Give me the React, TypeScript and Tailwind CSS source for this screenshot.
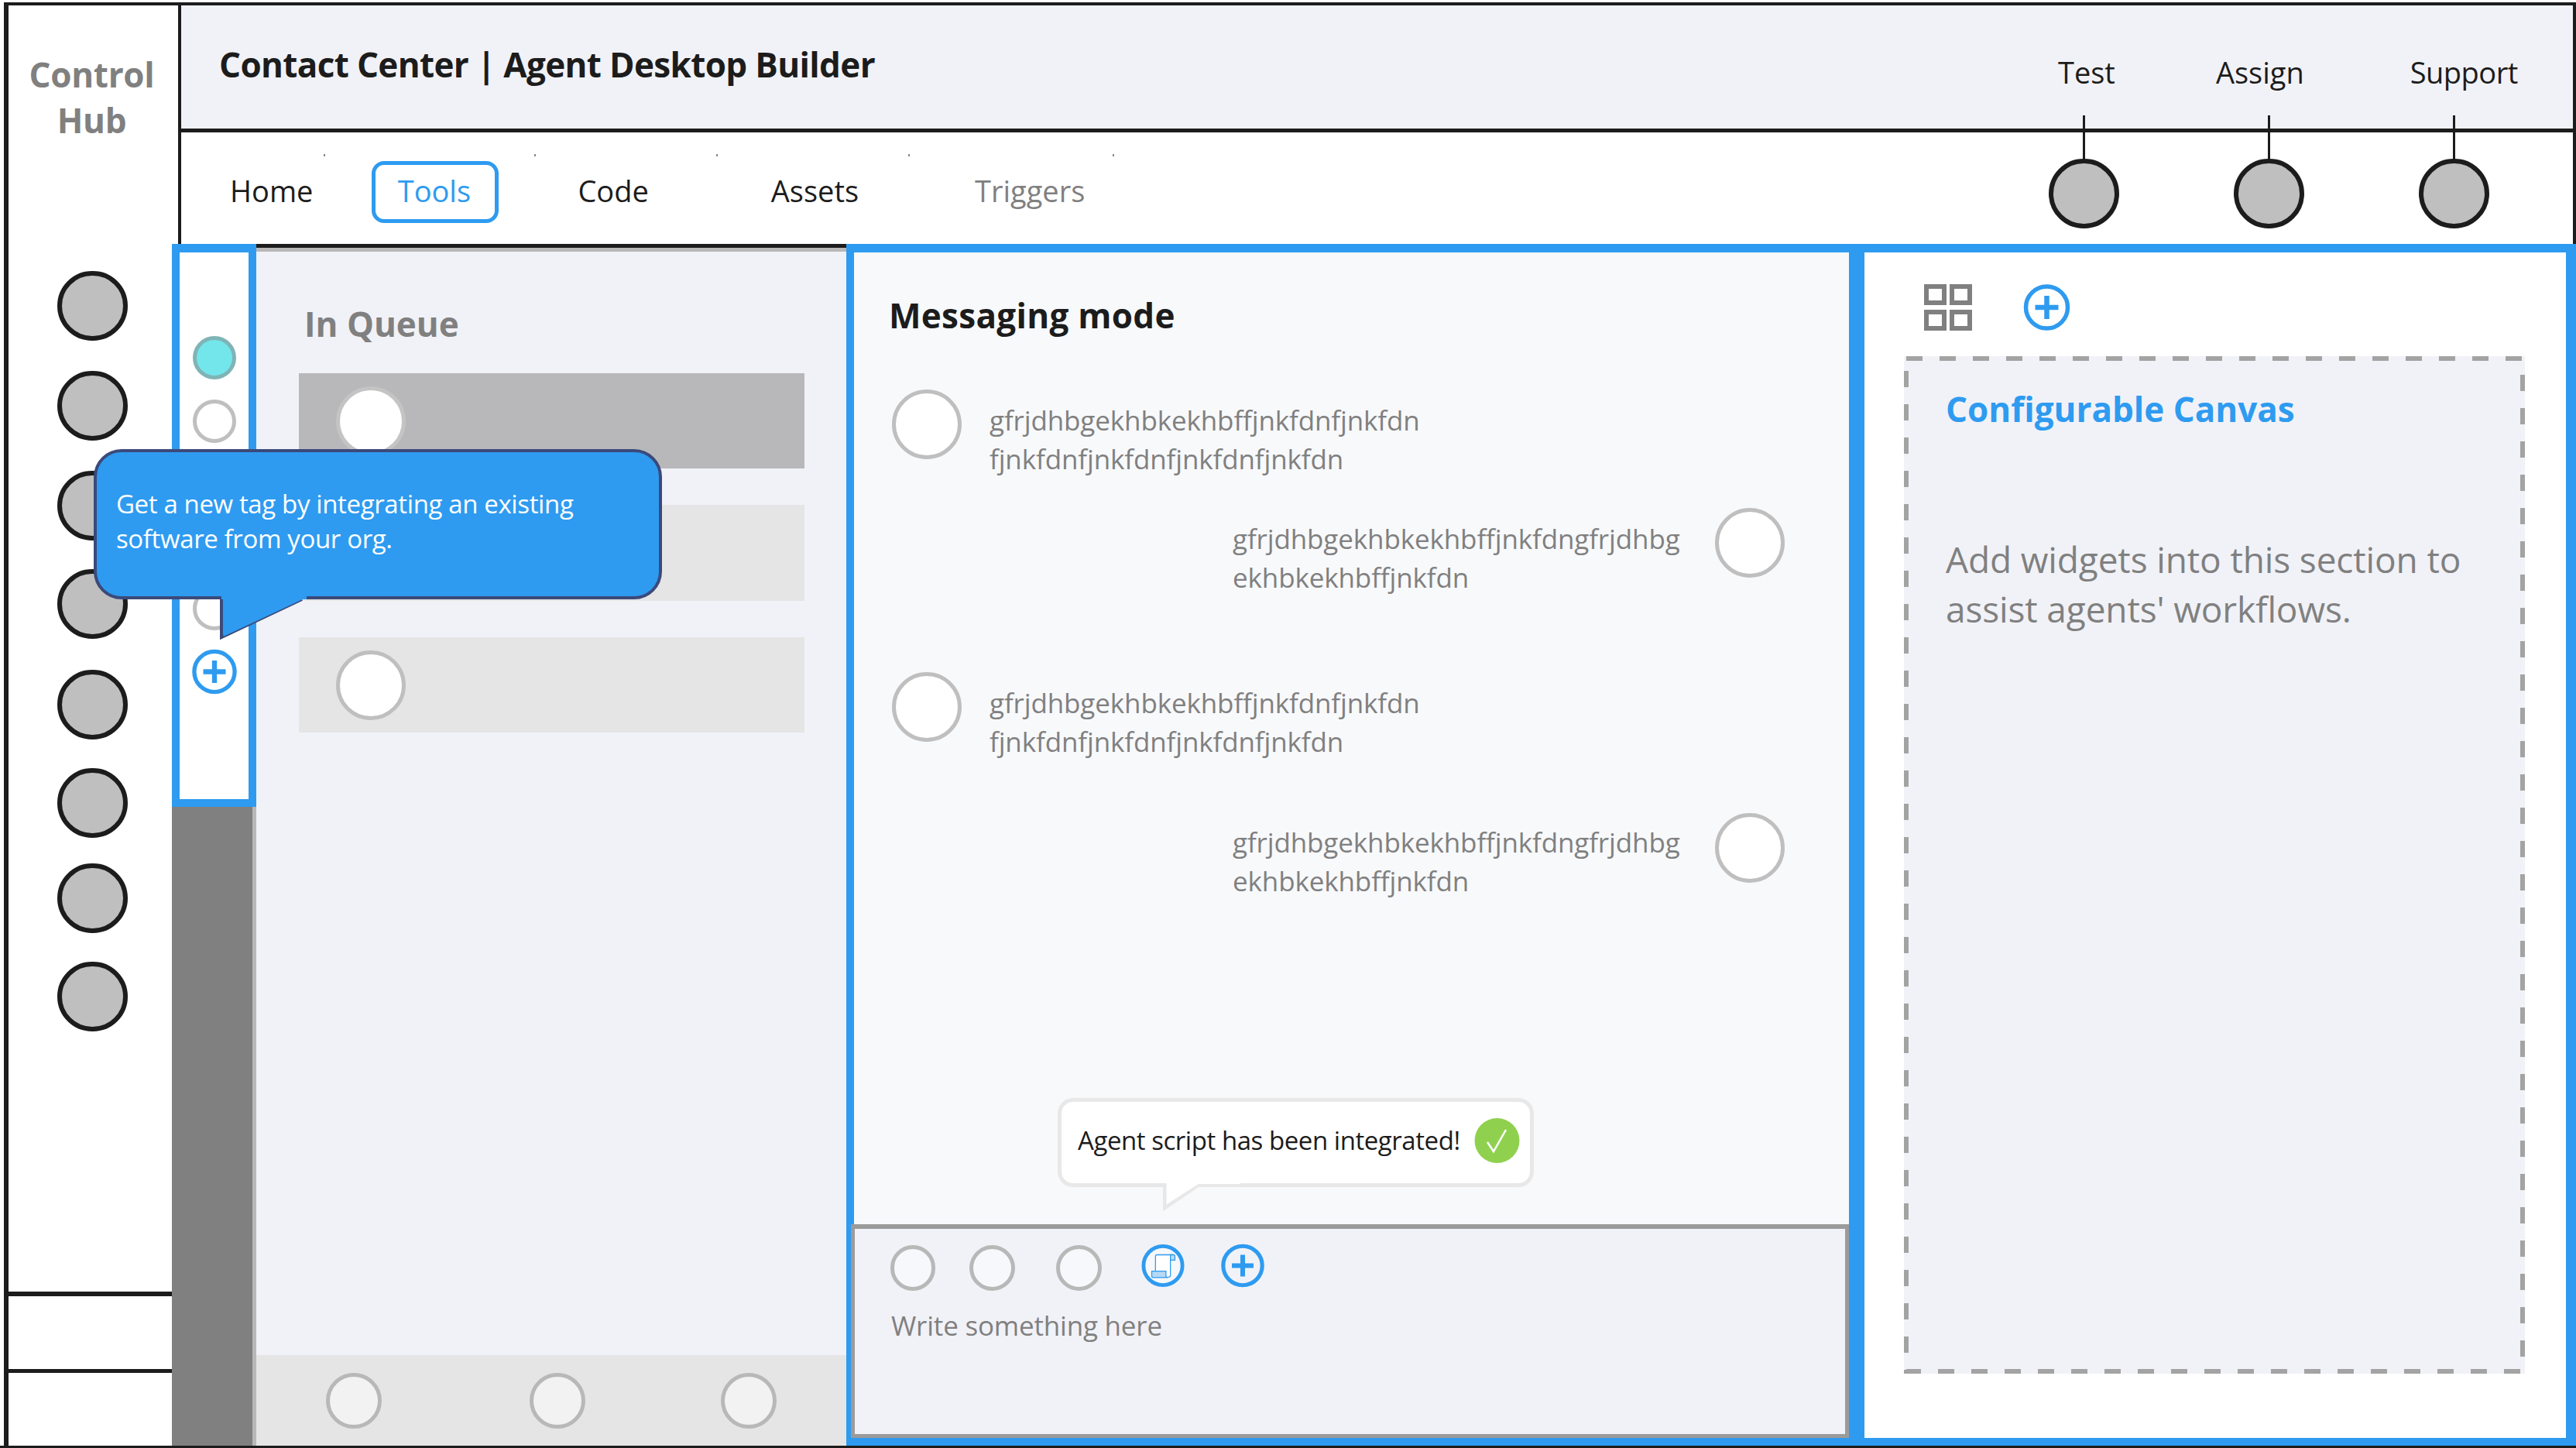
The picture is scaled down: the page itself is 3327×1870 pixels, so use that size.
import React from "react";

const Dark = ({ className = "" }: { className?: string }) => (
  <div className={`h-[90px] w-[91px] shrink-0 rounded-full border-[6px] border-[#1c1c1c] bg-[#bfbfbf] ${className}`} />
);

const Ring = ({ className = "" }: { className?: string }) => (
  <div className={`rounded-full border-solid shrink-0 ${className}`} />
);

const Plus = ({ className = "" }: { className?: string }) => (
  <svg className={`shrink-0 ${className}`} viewBox="0 0 60 60" fill="none">
    <circle cx="30" cy="30" r="27" stroke="#2e9bf0" strokeWidth="5.5" />
    <path d="M30 15V45M15 30H45" stroke="#2e9bf0" strokeWidth="6.5" />
  </svg>
);

const Scroll = () => (
  <svg className="h-[59px] w-[56px] shrink-0" viewBox="0 0 58 59" fill="none">
    <circle cx="29" cy="29.5" r="26" fill="#f7f8fb" stroke="#2e9bf0" strokeWidth="5" />
    <path d="M19 39V17Q19 15 21 15H43Q40 15 39 19V42Q39 45 36 45" fill="#fff" stroke="#2e9bf0" strokeWidth="1.3" />
    <path d="M39 15H43Q45 15 45 17V22H39Z" fill="#bcdcf5" stroke="#2e9bf0" strokeWidth="1.3" />
    <path d="M14 37H33V43Q33 45.5 36 45.5H16Q14 45.5 14 43Z" fill="#b5d9f5" stroke="#2e9bf0" strokeWidth="1.3" />
  </svg>
);

const Message = ({ a, b, className = "" }: { a: string; b: string; className?: string }) => (
  <div className={`text-[35px] leading-[50px] tracking-[-0.12px] text-[#808080] whitespace-nowrap ${className}`}>
    <div>{a}</div>
    <div>{b}</div>
  </div>
);

const Avatar = () => (
  <Ring className="h-[90px] w-[90px] border-[5px] border-[#bfbfbf] bg-white" />
);

export default function App() {
  return (
    <div
      className="flex h-[1870px] w-[3327px] overflow-hidden bg-white pt-[3px] pl-[5px] border-b-[3px] border-[#1c1c1c]"
      style={{ fontFamily: '"Open Sans", sans-serif' }}
    >
      {/* Left sidebar */}
      <aside className="flex h-full w-[229px] shrink-0 flex-col border-t-[4px] border-l-[6px] border-[#1c1c1c]">
        <div className="h-[308px] shrink-0 border-r-[4px] border-[#1c1c1c] pt-[60px] pr-[4px] text-center text-[44px] font-bold leading-[59px] tracking-[-0.3px] text-[#808080]">
          Control
          <br />
          Hub
        </div>
        <div className="flex w-[216px] flex-col items-center">
          <Dark className="mt-[35px]" />
          <Dark className="mt-[39px]" />
          <Dark className="mt-[39px]" />
          <Dark className="mt-[37px]" />
          <Dark className="mt-[40px]" />
          <Dark className="mt-[37px]" />
          <Dark className="mt-[33px]" />
          <Dark className="mt-[37px]" />
        </div>
        <div className="mt-auto h-[100px] w-[217px] border-t-[6px] border-[#1c1c1c]" />
        <div className="h-[99px] w-[217px] border-t-[5px] border-[#1c1c1c]" />
      </aside>

      {/* Main column */}
      <div className="flex h-full min-w-0 flex-1 flex-col">
        <header className="flex h-[168px] shrink-0 border-t-[4px] border-r-[4px] border-b-[5px] border-[#1c1c1c] bg-[#f1f2f7] text-[#1c1c1c]">
          <div className="ml-[49px] mt-[46px] text-[44px] font-bold leading-[60px] tracking-[-0.64px] whitespace-nowrap">
            Contact Center | Agent Desktop Builder
          </div>
          <div className="ml-[1528px] mt-[60px] text-[38px] leading-[52px] whitespace-nowrap">Test</div>
          <div className="ml-[130px] mt-[60px] text-[38px] leading-[52px] whitespace-nowrap">Assign</div>
          <div className="ml-[137px] mt-[60px] text-[38px] leading-[52px] tracking-[-0.5px] whitespace-nowrap">Support</div>
        </header>

        <nav className="relative flex h-[144px] shrink-0 items-center border-r-[4px] border-[#1c1c1c] pt-[6px] text-[38px] leading-[52px] text-[#1c1c1c]">
          <span className="absolute left-[184px] top-[28px] h-[3px] w-[2px] bg-[#888888]" />
          <span className="absolute left-[456px] top-[28px] h-[3px] w-[2px] bg-[#888888]" />
          <span className="absolute left-[691px] top-[28px] h-[3px] w-[2px] bg-[#888888]" />
          <span className="absolute left-[939px] top-[28px] h-[3px] w-[2px] bg-[#888888]" />
          <span className="absolute left-[1203px] top-[28px] h-[3px] w-[2px] bg-[#888888]" />
          <span className="ml-[63px]">Home</span>
          <span className="ml-[76px] mt-[4px] flex h-[80px] w-[164px] items-center justify-center rounded-[16px] border-[5px] border-[#2e9bf0] pr-[3px] pb-[4px] text-[#2e9bf0]">
            Tools
          </span>
          <span className="ml-[102px]">Code</span>
          <span className="ml-[158px]">Assets</span>
          <span className="ml-[150px] text-[#808080]">Triggers</span>
          <div className="ml-auto mr-[108px] mt-[8px] flex gap-[148px]">
            <div className="relative">
              <span className="absolute left-[44px] bottom-[90px] h-[56px] w-[3px] bg-[#1c1c1c]" />
              <Dark />
            </div>
            <div className="relative">
              <span className="absolute left-[44px] bottom-[90px] h-[56px] w-[3px] bg-[#1c1c1c]" />
              <Dark />
            </div>
            <div className="relative">
              <span className="absolute left-[44px] bottom-[90px] h-[56px] w-[3px] bg-[#1c1c1c]" />
              <Dark />
            </div>
          </div>
        </nav>

        {/* Content row */}
        <div className="relative ml-[-12px] flex min-h-0 flex-1">
          {/* Rail */}
          <div className="flex h-full w-[109px] shrink-0 flex-col border-r-[5px] border-[#b8b8b8] bg-[#808080]">
            <div className="mr-[-5px] flex h-[727px] flex-col items-center border-x-[10px] border-t-[11px] border-b-[10px] border-[#2e9bf0] bg-white">
              <Ring className="mt-[108px] h-[56px] w-[56px] border-[5px] border-[#7fb4b6] bg-[#73e6ec]" />
              <Ring className="mt-[26px] h-[56px] w-[56px] border-[5px] border-[#bfbfbf] bg-white" />
              <Ring className="mt-[186px] h-[56px] w-[56px] border-[5px] border-[#bfbfbf] bg-white" />
              <Plus className="mt-[24px] h-[59px] w-[58px]" />
            </div>
          </div>

          {/* Queue */}
          <section className="flex h-full w-[762px] shrink-0 flex-col border-t-[5px] border-[#1c1c1c]">
            <div className="flex flex-1 flex-col border-t-[5px] border-[#b8b8b8] bg-[#f1f2f7]">
              <h2 className="ml-[62px] mt-[63px] text-[44px] font-bold leading-[60px] text-[#808080]">In Queue</h2>
              <div className="ml-[55px] mt-[34px] flex h-[123px] w-[653px] items-center bg-[#b8b8ba] pl-[48px]">
                <Ring className="h-[90px] w-[90px] border-[5px] border-[#c4c4c4] bg-white" />
              </div>
              <div className="ml-[55px] mt-[47px] flex h-[124px] w-[653px] items-center bg-[#e5e5e5] pl-[48px]">
                <Avatar />
              </div>
              <div className="ml-[55px] mt-[47px] flex h-[123px] w-[653px] items-center bg-[#e5e5e5] pl-[48px]">
                <Avatar />
              </div>
              <div className="mt-auto flex h-[117px] items-center bg-[#e5e5e5]">
                <Ring className="ml-[90px] h-[72px] w-[72px] border-[5px] border-[#b8b8b8] bg-[#f2f2f2]" />
                <Ring className="ml-[191px] h-[72px] w-[72px] border-[5px] border-[#b8b8b8] bg-[#f2f2f2]" />
                <Ring className="ml-[175px] h-[72px] w-[72px] border-[5px] border-[#b8b8b8] bg-[#f2f2f2]" />
              </div>
            </div>
          </section>

          {/* Messaging */}
          <section className="flex h-full w-[1305px] shrink-0 flex-col border-[10px] border-t-[11px] border-[#2e9bf0]">
            <div className="relative flex min-h-0 flex-1 flex-col bg-[#f8f9fb]">
              <h2 className="ml-[45px] mt-[51px] text-[44px] font-bold leading-[60px] tracking-[0.3px] text-[#1c1c1c]">Messaging mode</h2>
              <div className="ml-[49px] mt-[66px] flex">
                <Avatar />
                <Message className="ml-[36px] mt-[15px]" a="gfrjdhbgekhbkekhbffjnkfdnfjnkfdn" b="fjnkfdnfjnkfdnfjnkfdnfjnkfdn" />
              </div>
              <div className="ml-[489px] mt-[38px] flex">
                <Message className="mt-[15px] w-[623px]" a="gfrjdhbgekhbkekhbffjnkfdngfrjdhbg" b="ekhbkekhbffjnkfdn" />
                <Avatar />
              </div>
              <div className="ml-[49px] mt-[97px] flex">
                <Avatar />
                <Message className="ml-[36px] mt-[15px]" a="gfrjdhbgekhbkekhbffjnkfdnfjnkfdn" b="fjnkfdnfjnkfdnfjnkfdnfjnkfdn" />
              </div>
              <div className="ml-[489px] mt-[67px] flex">
                <Message className="mt-[13px] w-[623px]" a="gfrjdhbgekhbkekhbffjnkfdngfrjdhbg" b="ekhbkekhbffjnkfdn" />
                <Avatar />
              </div>

              {/* Toast */}
              <div className="absolute left-[263px] top-[1092px] flex h-[115px] w-[615px] items-center rounded-[20px] border-[5px] border-[#e8e8e8] bg-white pb-[6px] pl-[21px] text-[33px] leading-[46px] tracking-[-0.45px] text-[#1c1c1c]">
                <span className="whitespace-nowrap">Agent script has been integrated!</span>
                <svg className="ml-[18px] h-[58px] w-[59px] shrink-0" viewBox="0 0 59 58">
                  <circle cx="29.5" cy="29" r="29" fill="#8fd14f" />
                  <path d="M17 31L25 43L41 15" fill="none" stroke="#ffffff" strokeWidth="2.5" />
                </svg>
                <svg className="absolute left-[131px] top-[105px] h-[36px] w-[102px]" viewBox="0 0 102 36">
                  <path d="M2 0V32L46 2H100" fill="#ffffff" stroke="#e8e8e8" strokeWidth="5" />
                  <path d="M5 0H100V1H46L5 27Z" fill="#ffffff" />
                </svg>
              </div>

              {/* Composer */}
              <div className="mt-auto ml-[-4px] flex h-[276px] shrink-0 flex-col border-x-[5px] border-t-[6px] border-b-[5px] border-[#9b9b9b] bg-[#f1f2f7] pl-[46px]">
                <div className="mt-[18px] flex items-start">
                  <Ring className="mt-[3px] h-[59px] w-[58px] border-[5px] border-[#b8b8b8] bg-[#f7f8fb]" />
                  <Ring className="ml-[44px] mt-[3px] h-[59px] w-[59px] border-[5px] border-[#b8b8b8] bg-[#f7f8fb]" />
                  <Ring className="ml-[53px] mt-[3px] h-[59px] w-[59px] border-[5px] border-[#b8b8b8] bg-[#f7f8fb]" />
                  <div className="ml-[51px]">
                    <Scroll />
                  </div>
                  <Plus className="ml-[47px] h-[59px] w-[56px]" />
                </div>
                <div className="mt-[20px] ml-[1px] text-[35px] leading-[50px] tracking-[-0.2px] text-[#808080]">Write something here</div>
              </div>
            </div>
          </section>

          {/* Canvas panel */}
          <section className="flex h-full min-w-0 flex-1 flex-col border-[10px] border-t-[11px] border-r-[13px] border-[#2e9bf0] bg-white">
            <div className="ml-[77px] mt-[41px] flex items-center">
              <svg className="h-[60px] w-[62px]" viewBox="0 0 62 60" fill="none" stroke="#808080" strokeWidth="6">
                <rect x="3" y="3" width="23" height="21" />
                <rect x="36" y="3" width="23" height="21" />
                <rect x="3" y="36" width="23" height="21" />
                <rect x="36" y="36" width="23" height="21" />
              </svg>
              <Plus className="ml-[66px] h-[60px] w-[61px]" />
            </div>
            <div className="relative ml-[51px] mt-[33px] h-[1314px] w-[802px] bg-[#f1f2f7] pl-[54px]">
              <svg className="absolute left-0 top-0 h-[1314px] w-[802px]" viewBox="0 0 802 1314" fill="none">
                <rect x="3" y="3" width="796" height="1308" stroke="#a3a3a3" strokeWidth="6" strokeDasharray="21 22" />
              </svg>
              <h2 className="relative pt-[38px] text-[44px] font-bold leading-[60px] text-[#2e9bf0]">Configurable Canvas</h2>
              <p className="relative mt-[132px] text-[46px] leading-[64px] tracking-[-0.13px] text-[#808080]">
                Add widgets into this section to
                <br />
                assist agents' workflows.
              </p>
            </div>
          </section>

          {/* Tooltip */}
          <div className="absolute left-[-101px] top-[265px] flex h-[194px] w-[734px] items-center rounded-[36px] border-[4px] border-[#3b4a7a] bg-[#2e9bf0] pl-[25px] text-[33px] leading-[45px] tracking-[-0.37px] text-white">
            <p className="mt-[-9px] whitespace-nowrap">
              Get a new tag by integrating an existing
              <br />
              software from your org.
            </p>
            <svg className="absolute left-[159px] top-[186px] h-[60px] w-[112px]" viewBox="0 0 112 60">
              <path d="M2 0V53L106 4H112V0Z" fill="#2e9bf0" />
              <path d="M2 4V53L106 4" fill="none" stroke="#3b4a7a" strokeWidth="4" />
              <path d="M4.5 0H108V3.5L4.5 52Z" fill="#2e9bf0" />
            </svg>
          </div>
        </div>
      </div>
    </div>
  );
}
